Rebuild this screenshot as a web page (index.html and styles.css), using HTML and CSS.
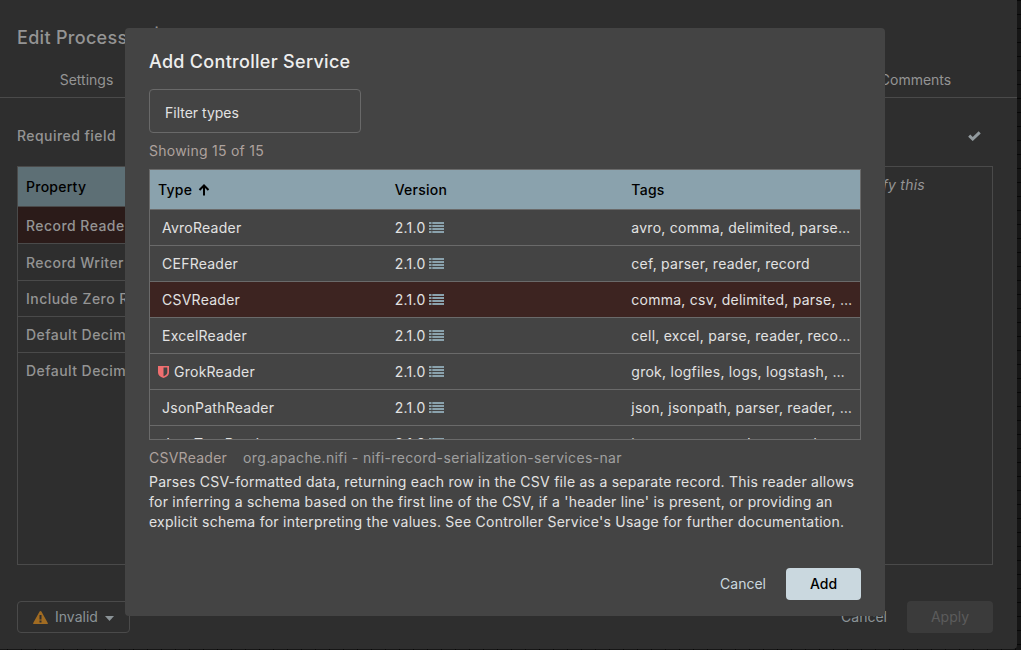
FILE: index.html
```html
<!DOCTYPE html>
<html lang="en">
<head>
<meta charset="utf-8">
<title>Add Controller Service</title>
<link rel="stylesheet" href="styles.css">
</head>
<body>
<svg width="0" height="0" class="defs">
  <symbol id="list" viewBox="0 0 15 12"><path d="M0 0h2.500v2H0zM3.300 0H15v2H3.300zM0 3h2.500v2H0zM3.300 3H15v2H3.300zM0 6h2.500v2H0zM3.300 6H15v2H3.300zM0 9h2.500v2H0zM3.300 9H15v2H3.300z"/></symbol>
</svg>
<div class="editor">
  <h2 class="editor-title">Edit Processor <span class="divider">|</span> ConvertRecord</h2>
  <nav class="tabs"><span>Settings</span><span>Scheduling</span><span>Properties</span><span>Relationships</span><span>Comments</span></nav>
  <div class="required"><span>Required field</span>
    <svg class="check" width="13" height="10" viewBox="0 0 13 10"><path d="M1.2 4.7L4.7 8 11.7 1.3" fill="none" stroke="currentColor" stroke-width="3"/></svg>
  </div>
  <div class="panels">
    <div class="properties">
      <div class="prop-head">Property</div>
      <div class="prop chosen">Record Reader</div>
      <div class="prop">Record Writer</div>
      <div class="prop">Include Zero Record FlowFiles</div>
      <div class="prop">Default Decimal Precision</div>
      <div class="prop">Default Decimal Scale</div>
    </div>
    <div class="verification">Click the check to verify this</div>
  </div>
  <div class="editor-actions">
    <button class="status">
      <svg width="15" height="13" viewBox="0 0 15 13"><path fill="#a06b22" fill-rule="evenodd" d="M7.5 0Q8.1 0 8.4.6L14.8 12q.3 1-.8 1H1q-1.1 0-.8-1L6.600.6Q6.900 0 7.500 0zM6.500 4v4.500h2V4zm0 5.500v2h2v-2z"/></svg>
      <span>Invalid</span>
      <svg class="caret" width="9" height="5" viewBox="0 0 9 5"><path fill="currentColor" d="M0 0h9L4.500 5z"/></svg>
    </button>
    <span class="editor-cancel">Cancel</span>
    <button class="apply">Apply</button>
  </div>
</div>
<div class="dialog">
  <h2 class="dialog-title">Add Controller Service</h2>
  <div class="filter">Filter types</div>
  <div class="count">Showing 15 of 15</div>
  <div class="table">
    <div class="row head"><div class="type">Type <svg class="arrow" width="12" height="12" viewBox="0 0 12 12"><path d="M6 11.500V1.500M1.500 6L6 1.500 10.500 6" fill="none" stroke="currentColor" stroke-width="2"/></svg></div><div>Version</div><div>Tags</div></div>
    <div class="row"><div class="name">AvroReader</div><div class="version">2.1.0 <svg><use href="#list"/></svg></div><div class="tags">avro, comma, delimited, parse, parser, reader</div></div>
    <div class="row"><div class="name">CEFReader</div><div class="version">2.1.0 <svg><use href="#list"/></svg></div><div class="tags">cef, parser, reader, record</div></div>
    <div class="row selected"><div class="name">CSVReader</div><div class="version">2.1.0 <svg><use href="#list"/></svg></div><div class="tags">comma, csv, delimited, parse, parser, reader</div></div>
    <div class="row"><div class="name">ExcelReader</div><div class="version">2.1.0 <svg><use href="#list"/></svg></div><div class="tags">cell, excel, parse, reader, record, row</div></div>
    <div class="row"><div class="name restricted"><svg class="shield" width="11" height="12" viewBox="0 0 11 12"><path fill="#f06f70" fill-rule="evenodd" d="M0 0h11v6.500Q11 10 5.500 12 0 10 0 6.500zM5.500 1.500v8.800Q9.300 8.700 9.300 6.200V1.500z"/></svg>GrokReader</div><div class="version">2.1.0 <svg><use href="#list"/></svg></div><div class="tags">grok, logfiles, logs, logstash, parse, reader</div></div>
    <div class="row"><div class="name">JsonPathReader</div><div class="version">2.1.0 <svg><use href="#list"/></svg></div><div class="tags">json, jsonpath, parser, reader, record</div></div>
    <div class="row"><div class="name">JsonTreeReader</div><div class="version">2.1.0 <svg><use href="#list"/></svg></div><div class="tags">json, parser, reader, record, tree</div></div>
  </div>
  <div class="source"><span class="source-name">CSVReader</span><span class="bundle">org.apache.nifi - nifi-record-serialization-services-nar</span></div>
  <p class="description">Parses CSV-formatted data, returning each row in the CSV file as a separate record. This reader allows for inferring a schema based on the first line of the CSV, if a 'header line' is present, or providing an explicit schema for interpreting the values. See Controller Service's Usage for further documentation.</p>
  <div class="dialog-actions"><span class="cancel">Cancel</span><button class="add">Add</button></div>
</div>
</body>
</html>
```
FILE: styles.css
```css
* { box-sizing: border-box; }
body {
  margin: 0;
  width: 1021px;
  height: 650px;
  overflow: hidden;
  position: relative;
  background-color: #161616;
  background-image: linear-gradient(#070707 1px, transparent 1px), linear-gradient(90deg, #070707 1px, transparent 1px);
  background-size: 14px 14px;
  background-position: 7px 0;
  font: 14px/20px Inter, sans-serif;
  letter-spacing: 0.25px;
}
button { font: inherit; letter-spacing: 0; border: 0; margin: 0; padding: 0; }
h2 { margin: 0; font-weight: 500; }
.defs { position: absolute; }

.editor {
  width: 1017px;
  height: 649px;
  display: flex;
  flex-direction: column;
  background: #2e2e2e;
  color: #949494;
  border-radius: 0 0 4px 0;
}
.editor-title { padding: 23px 17px 0; height: 62px; font-size: 18px; line-height: 30px; letter-spacing: 0.3px; white-space: nowrap; }
.divider { padding-left: 2.5px; }
.tabs { display: grid; grid-template-columns: 173px 1fr 1fr 1fr 203px; height: 36px; border-bottom: 1px solid #4a4a4a; text-align: center; line-height: 36px; letter-spacing: 0; }
.required { display: flex; align-items: center; justify-content: space-between; height: 68px; padding: 7px 36px 0 17px; font-weight: 500; letter-spacing: 0.45px; }
.check { color: #929a9e; }
.panels { display: flex; justify-content: space-between; height: 399px; padding: 0 24px 0 17px; }
.properties { width: 540px; border: 1px solid #4a4a4a; font-weight: 500; letter-spacing: 0.45px; }
.prop-head { height: 40px; padding-left: 8px; line-height: 40px; background: #5d6f75; color: #000; border-bottom: 1px solid #4a4a4a; letter-spacing: 0.25px; }
.prop { height: 36px; padding-left: 8px; line-height: 36px; border-bottom: 1px solid #4a4a4a; }
.prop:nth-child(2), .prop:nth-child(3) { height: 37px; line-height: 38px; }
.prop:last-child { border-bottom: 0; }
.chosen { background: #2b1b19; }
.verification { width: 380px; border: 1px solid #4a4a4a; padding: 8px 67px 0 0; text-align: right; font-style: italic; }
.editor-actions { display: flex; align-items: center; height: 32px; margin: 36px 24px 0 17px; }
.status { display: flex; align-items: center; width: 113px; height: 32px; padding-left: 15px; gap: 7px; color: #8b9397; background: transparent; border: 1px solid #4a4a4a; border-radius: 4px; }
.caret { margin-top: 2px; }
.editor-cancel { margin-left: auto; margin-right: 20px; color: #8b9397; letter-spacing: 0; }
.apply { width: 86px; height: 32px; border-radius: 4px; background: #3b3b3b; color: #5c5c5c; }

.dialog {
  position: absolute;
  left: 125px;
  top: 28px;
  width: 760px;
  height: 588px;
  padding: 18px 24px 16px;
  display: flex;
  flex-direction: column;
  background: #444;
  color: #e2e2e2;
  border-radius: 4px;
}
.dialog-title { padding-top: 1px; font-size: 18px; line-height: 30px; height: 43px; letter-spacing: 0.3px; color: #eee; }
.filter { width: 212px; height: 44px; padding: 3px 15px 0; line-height: 40px; border: 1px solid #696969; border-radius: 4px; letter-spacing: 0; }
.count { height: 36px; padding-top: 8px; color: #aea29e; }
.table { height: 271px; flex: none; overflow: hidden; border: 1px solid #6a6a6a; }
.row { display: grid; grid-template-columns: repeat(3, 1fr); height: 36px; line-height: 35px; border-bottom: 1px solid #6a6a6a; }
.row > div { padding: 0 8px; overflow: hidden; white-space: nowrap; text-overflow: ellipsis; }
.head { height: 40px; line-height: 39px; font-weight: 500; background: #8aa2ad; color: #000; }
.arrow { margin-left: 2px; vertical-align: -1px; }
.row > .name { padding-left: 12px; }
.row > .restricted { padding-left: 8px; }
.shield { margin-right: 5px; vertical-align: -1px; }
.selected { background: #3d2421; }
.version svg { width: 15px; height: 12px; margin-left: -0.6px; fill: #8aa2ad; vertical-align: -1px; }
.source { display: flex; gap: 16px; height: 32px; padding-top: 8px; color: #a0a0a0; }
.source-name { color: #aea29e; }
.bundle { letter-spacing: 0.35px; }
.description { margin: 0; }
.dialog-actions { display: flex; align-items: center; justify-content: flex-end; gap: 20px; margin-top: auto; }
.cancel { color: #cad8df; letter-spacing: 0; }
.add { width: 75px; height: 32px; border-radius: 4px; background: #cad8df; color: #000; font-weight: 500; }
```
